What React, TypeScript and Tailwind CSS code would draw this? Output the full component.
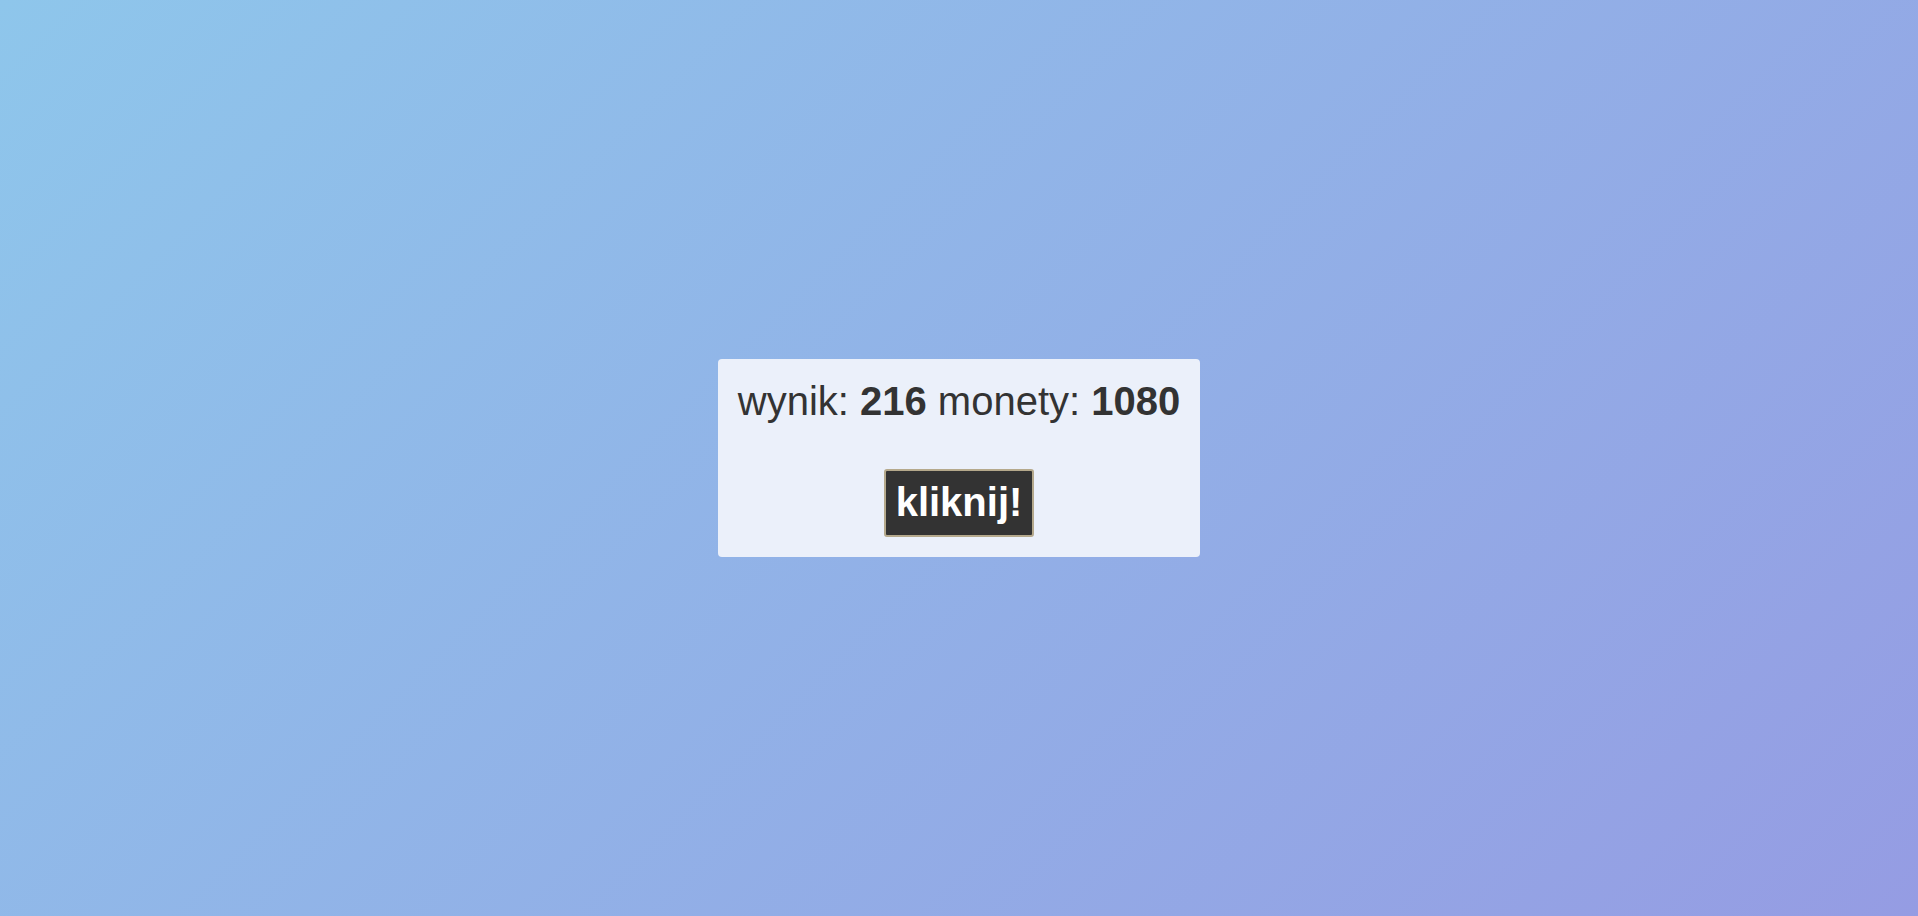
import React, { useState } from 'react';

const App: React.FC = () => {
  const [score, setScore] = useState(216);
  const [coins, setCoins] = useState(1080);

  const click = () => {
    setScore(score + 1);
    setCoins(coins + 5);
  };

  return (
    <div className="min-h-screen w-full flex items-center justify-center bg-[linear-gradient(135deg,#8ec6eb,#959ce3)] font-['Liberation_Sans',Arial,sans-serif]">
      <div className="bg-[#ebf0fa] rounded-[4px] px-5 pt-[19px] pb-[20px] flex flex-col items-center gap-[45px] text-[#333333]">
        <p className="text-[40px] leading-[46px] whitespace-nowrap">
          wynik: <b>{score}</b> monety: <b>{coins}</b>
        </p>
        <button
          onClick={click}
          className="bg-[#333333] text-white text-[40px] leading-[46px] font-bold px-[10px] pt-2 pb-[10px] border-2 border-[#b5a98c] rounded-[3px] cursor-pointer"
        >
          kliknij!
        </button>
      </div>
    </div>
  );
};

export default App;
